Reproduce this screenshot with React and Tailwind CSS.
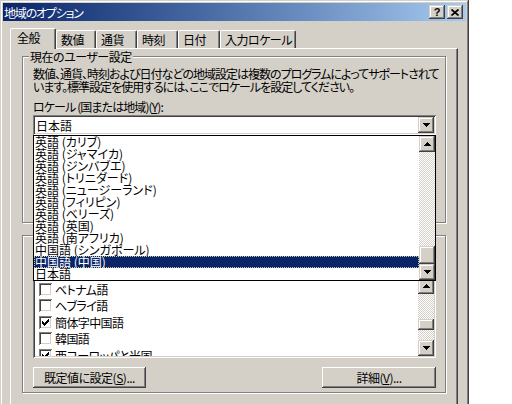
import React from 'react'

const FONT = "font-['Noto_Sans_CJK_JP','Noto_Sans_CJK_SC',sans-serif] [font-feature-settings:'palt']"
const RAISED = 'shadow-[inset_-1px_-1px_#404040,inset_1px_1px_#ffffff,inset_-2px_-2px_#808080]'
const BEVEL = 'shadow-[inset_-1px_-1px_#404040,inset_1px_1px_#d4d0c8,inset_-2px_-2px_#808080,inset_2px_2px_#ffffff]'
const SUNKEN = 'shadow-[inset_1px_1px_#808080,inset_-1px_-1px_#ffffff,inset_2px_2px_#404040,inset_-2px_-2px_#d4d0c8]'
const TRACK = 'bg-[image:repeating-conic-gradient(#ffffff_0_25%,#d4d0c8_0_50%)] bg-[length:2px_2px]'
const ETCHED = 'border border-[#808080] shadow-[inset_1px_1px_#ffffff,1px_1px_#ffffff]'

const TABS = [
  { label: '全般', w: 46, active: true },
  { label: '数値', w: 40 },
  { label: '通貨', w: 41 },
  { label: '時刻', w: 41 },
  { label: '日付', w: 42 },
  { label: '入力ロケール', w: 76 },
]

const LOCALES = [
  '英語 (カリブ)',
  '英語 (ジャマイカ)',
  '英語 (ジンバブエ)',
  '英語 (トリニダード)',
  '英語 (ニュージーランド)',
  '英語 (フィリピン)',
  '英語 (ベリーズ)',
  '英語 (英国)',
  '英語 (南アフリカ)',
  '中国語 (シンガポール)',
  '中国語 (中国)',
  '日本語',
]

const LANGS = [
  { label: 'ベトナム語', on: false },
  { label: 'ヘブライ語', on: false },
  { label: '簡体字中国語', on: true },
  { label: '韓国語', on: false },
  { label: '西ヨーロッパと米国', on: true },
]

function Arrow({ down }) {
  const rows = down ? [[0, 7], [1, 5], [2, 3], [3, 1]] : [[3, 1], [2, 3], [1, 5], [0, 7]]
  return (
    <svg width="7" height="4" viewBox="0 0 7 4" shapeRendering="crispEdges" className="block">
      {rows.map(([x, w], i) => <rect key={i} x={x} y={i} width={w} height="1" fill="#000" />)}
    </svg>
  )
}

function ScrollBtn({ down }) {
  return (
    <div className={`w-[16px] h-[16px] shrink-0 bg-[#d4d0c8] ${BEVEL} flex items-center justify-center`}>
      <Arrow down={down} />
    </div>
  )
}

function Scrollbar({ before, thumb }) {
  return (
    <div className="w-[16px] flex flex-col shrink-0">
      <ScrollBtn />
      <div className={`flex-1 ${TRACK}`}>
        <div style={{ marginTop: before, height: thumb }} className={`bg-[#d4d0c8] ${BEVEL}`} />
      </div>
      <ScrollBtn down />
    </div>
  )
}

function Checkbox({ on }) {
  return (
    <div className={`w-[13px] h-[13px] shrink-0 bg-white ${SUNKEN} flex items-center justify-center`}>
      {on && (
        <svg width="7" height="7" viewBox="0 0 7 7" shapeRendering="crispEdges">
          <path d="M0 2h1v1h1v1h1v-1h1v-1h1v-1h1v-1h1v3h-1v1h-1v1h-1v1h-1v1h-1v-1h-1v-1h-1z" fill="#000" />
        </svg>
      )}
    </div>
  )
}

function Button({ w, children }) {
  return (
    <div style={{ width: w }} className={`h-[21px] bg-[#d4d0c8] ${RAISED} flex items-center justify-center tracking-[-0.5px]`}>
      {children}
    </div>
  )
}

function Group({ title, className, children }) {
  return (
    <div className={`relative ${ETCHED} ${className}`}>
      {title && (
        <span className="absolute left-[6px] -top-[7px] px-[1px] bg-[#d4d0c8] leading-[13px] whitespace-nowrap tracking-[-0.5px]">{title}</span>
      )}
      <div className="pl-[10px] pt-[10px]">{children}</div>
    </div>
  )
}

export default function App() {
  return (
    <div className={`relative w-[512px] h-[404px] overflow-hidden bg-white text-black text-[12px] leading-[13px] ${FONT}`}>
      <div className={`w-[469px] h-[430px] bg-[#d4d0c8] p-[3px] ${BEVEL}`}>

        {/* title bar */}
        <div className="h-[18px] flex items-center pl-[1px] pr-[3px] bg-linear-to-r from-[#0a246a] to-[#a6caf0]">
          <span className="text-white whitespace-nowrap tracking-[-1.2px]">地域のオプション</span>
          <div className="ml-auto flex gap-[2px]">
            <div className={`w-[16px] h-[14px] bg-[#d4d0c8] ${BEVEL} flex items-center justify-center`}>
              <span className="font-['Liberation_Sans',sans-serif] font-bold text-[11px] leading-none">?</span>
            </div>
            <div className={`w-[16px] h-[14px] bg-[#d4d0c8] ${BEVEL} flex items-center justify-center`}>
              <svg width="8" height="7" viewBox="0 0 8 7">
                <path d="M0.5 0.5L7.5 6.5M7.5 0.5L0.5 6.5" stroke="#000" strokeWidth="1.7" />
              </svg>
            </div>
          </div>
        </div>

        {/* tabs */}
        <div className="flex items-end h-[20px] mt-[7px] ml-[7px]">
          {TABS.map(t => (
            <div key={t.label}
              style={{ width: t.w }}
              className={`whitespace-nowrap tracking-[-0.5px] border-t border-l border-white border-r border-r-[#404040] rounded-tl-[2px] rounded-tr-[2px] shadow-[inset_-1px_0_#808080] bg-[#d4d0c8]
                ${t.active ? 'relative z-10 h-[21px] -mb-[1px] pl-[6px] pt-[2px]' : 'h-[18px] pl-[4px] pt-[2px]'}`}>
              {t.label}
            </div>
          ))}
        </div>

        {/* tab panel */}
        <div className="ml-[7px] w-[448px] h-[400px] border-t border-l border-white border-r border-r-[#404040] shadow-[inset_-1px_0_#808080] pl-[11px] pt-[7px]">

          <Group title="現在のユーザー設定" className="w-[424px] h-[167px]">
            <p className="whitespace-nowrap tracking-[-1px]">数値、通貨、時刻および日付などの地域設定は複数のプログラムによってサポートされて</p>
            <p className="whitespace-nowrap tracking-[-1px]">います。標準設定を使用するには、ここでロケールを設定してください。</p>
            <p className="mt-[7px] whitespace-nowrap tracking-[-0.9px]">ロケール (国または地域)(<span className="underline">Y</span>):</p>
            <div className={`mt-[2px] w-[403px] h-[20px] bg-white ${SUNKEN} p-[2px] flex`}>
              <span className="flex-1 pl-[1px] pt-[2px]">日本語</span>
              <div className={`w-[16px] h-[16px] bg-[#d4d0c8] ${BEVEL} flex items-center justify-center`}>
                <Arrow down />
              </div>
            </div>
          </Group>

          <Group className="mt-[12px] w-[424px] h-[158px]">
            <div className={`mt-[30px] w-[403px] h-[82px] bg-white ${SUNKEN} p-[2px] flex`}>
              <div className="flex-1 overflow-hidden pt-[3px] pl-[4px]">
                {LANGS.map(l => (
                  <div key={l.label} className="h-[16.5px] flex items-center gap-[3px] whitespace-nowrap tracking-[-0.6px]">
                    <Checkbox on={l.on} />
                    <span>{l.label}</span>
                  </div>
                ))}
              </div>
              <Scrollbar before={25} thumb={11} />
            </div>
            <div className="mt-[9px] w-[403px] flex justify-between">
              <Button w={113}>既定値に設定(<span className="underline">S</span>)...</Button>
              <Button w={114}>詳細(<span className="underline">V</span>)...</Button>
            </div>
          </Group>
        </div>
      </div>

      {/* open locale dropdown */}
      <div className="absolute left-[33px] top-[135px] w-[403px] h-[146px] border border-black bg-white flex">
        <div className="flex-1 leading-[12px]">
          {LOCALES.map((l, i) => (
            <div key={l}
              className={`h-[12px] pl-[1px] whitespace-nowrap ${i === 10 ? 'bg-[#0a246a] text-white outline outline-1 outline-dotted -outline-offset-1 outline-[#c8c890]' : ''}`}>
              {l}
            </div>
          ))}
        </div>
        <Scrollbar before={94} thumb={18} />
      </div>
    </div>
  )
}
